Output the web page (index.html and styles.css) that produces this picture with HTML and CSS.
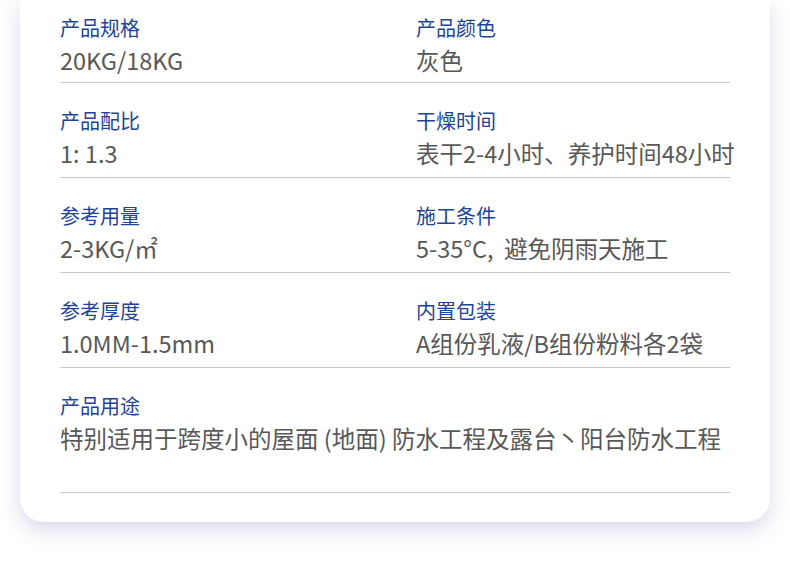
FILE: index.html
```html
<!DOCTYPE html>
<html lang="zh-CN">
<head>
<meta charset="utf-8">
<title>产品参数</title>
<link rel="stylesheet" href="styles.css">
</head>
<body>
<div class="card">
  <div class="row">
    <div class="cell">
      <div class="label">产品规格</div>
      <div class="value">20KG/18KG</div>
    </div>
    <div class="cell">
      <div class="label">产品颜色</div>
      <div class="value">灰色</div>
    </div>
  </div>
  <div class="row">
    <div class="cell">
      <div class="label">产品配比</div>
      <div class="value">1: 1.3</div>
    </div>
    <div class="cell">
      <div class="label">干燥时间</div>
      <div class="value">表干2-4小时、养护时间48小时</div>
    </div>
  </div>
  <div class="row">
    <div class="cell">
      <div class="label">参考用量</div>
      <div class="value">2-3KG/㎡</div>
    </div>
    <div class="cell">
      <div class="label">施工条件</div>
      <div class="value">5-35°C,&nbsp; 避免阴雨天施工</div>
    </div>
  </div>
  <div class="row">
    <div class="cell">
      <div class="label">参考厚度</div>
      <div class="value">1.0MM-1.5mm</div>
    </div>
    <div class="cell">
      <div class="label">内置包装</div>
      <div class="value">A组份乳液/B组份粉料各2袋</div>
    </div>
  </div>
  <div class="row row-wide">
    <div class="cell">
      <div class="label">产品用途</div>
      <div class="value">特别适用于跨度小的屋面 (地面) 防水工程及露台丶阳台防水工程</div>
    </div>
  </div>
</div>
</body>
</html>
```

FILE: styles.css
```css
* {
  box-sizing: border-box;
}

html, body {
  margin: 0;
  padding: 0;
  background: #ffffff;
}

body {
  width: 790px;
  height: 578px;
  overflow: hidden;
  font-family: "Noto Sans CJK SC", "Noto Sans", sans-serif;
}

.card {
  margin: 0 20px;
  background: #ffffff;
  border-radius: 0 0 24px 24px;
  box-shadow: 0 8px 20px rgba(80, 80, 160, 0.22);
  padding: 0 40px 29px;
}

.row {
  display: grid;
  grid-template-columns: 356px 1fr;
  padding: 26px 0 9px;
  border-bottom: 1px solid #c9c9c9;
}

.row:first-child {
  padding-top: 16px;
  padding-bottom: 7px;
}

.row-wide {
  grid-template-columns: 1fr;
  padding-bottom: 39px;
}

.cell {
  display: flex;
  flex-direction: column;
  gap: 5px;
}

.label {
  font-size: 20px;
  line-height: 24px;
  color: #1e4496;
}

.value {
  font-size: 23.5px;
  line-height: 30px;
  color: #585858;
  white-space: nowrap;
}
```
